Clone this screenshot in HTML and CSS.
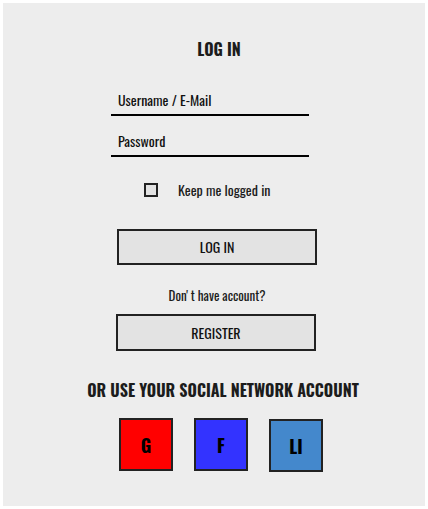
FILE: index.html
```html
<!DOCTYPE html>
<html>
<head>
<meta charset="utf-8">
<link rel="stylesheet" href="styles.css">
</head>
<body>
<div class="page">
  <h2 class="title">LOG IN</h2>
  <form class="form">
    <input class="field" type="text" placeholder="Username / E-Mail">
    <input class="field field-pass" type="password" placeholder="Password">
    <label class="remember">
      <input class="check" type="checkbox">
      <span>Keep me logged in</span>
    </label>
    <button class="btn btn-login" type="button">LOG IN</button>
  </form>
  <p class="noacc">Don' t have account?</p>
  <button class="btn btn-register" type="button">REGISTER</button>
  <h3 class="social-title">OR USE YOUR SOCIAL NETWORK ACCOUNT</h3>
  <div class="social">
    <a class="soc soc-g">G</a>
    <a class="soc soc-f">F</a>
    <a class="soc soc-li">LI</a>
  </div>
</div>
</body>
</html>
```
FILE: styles.css
```css
* { box-sizing: border-box; }
html, body { margin: 0; padding: 0; background: #fff; }
body { font-family: "Oswald", "Roboto", sans-serif; color: #1c1c1c; }

.page {
  margin: 3px;
  width: 422px;
  height: 503px;
  background: #ededed;
  padding-top: 36px;
  display: flex;
  flex-direction: column;
  align-items: flex-start;
}

.title {
  align-self: stretch;
  margin: 0;
  padding-left: 10px;
  text-align: center;
  font-size: 16px;
  line-height: 20px;
  font-weight: 700;
}

.form {
  display: flex;
  flex-direction: column;
  align-items: flex-start;
  margin: 30px 0 0 0;
}

.field {
  display: block;
  margin-left: 108px;
  width: 198px;
  height: 27px;
  padding: 0 7px 5px;
  border: 0;
  border-bottom: 2px solid #000;
  background: transparent;
  font-family: "Oswald", sans-serif;
  font-size: 14px;
  line-height: 20px;
  color: #111;
  outline: none;
}
.field::placeholder { color: #111; opacity: 1; }
.field-pass { margin-top: 14px; }

.remember {
  display: flex;
  align-items: center;
  gap: 20px;
  margin: 23px 0 0 141px;
  font-size: 14px;
  line-height: 20px;
}
.check {
  appearance: none;
  -webkit-appearance: none;
  margin: 0;
  width: 14px;
  height: 14px;
  border: 2px solid #222;
  background: #e3e3e3;
}

.btn {
  display: block;
  width: 200px;
  height: 36px;
  border: 2px solid #222;
  background: #e3e3e3;
  font-family: "Oswald", sans-serif;
  font-size: 14px;
  line-height: 32px;
  color: #111;
  padding: 0;
}
.btn-login { margin: 29px 0 0 114px; }

.noacc {
  align-self: stretch;
  margin: 22px 0 0 0;
  padding-left: 6px;
  text-align: center;
  font-size: 13px;
  line-height: 17px;
}

.btn-register { margin: 10px 0 0 113px; height: 37px; line-height: 33px; }

.social-title {
  align-self: stretch;
  margin: 29px 0 0 0;
  padding-left: 18px;
  text-align: center;
  font-size: 16px;
  line-height: 20px;
  font-weight: 700;
}

.social {
  display: flex;
  gap: 21px;
  margin: 18px 0 0 116px;
}
.soc {
  display: flex;
  align-items: center;
  justify-content: center;
  width: 54px;
  height: 53px;
  border: 2px solid #222;
  font-size: 18px;
  font-weight: 700;
  color: #000;
}
.soc-g { background: #ff0000; }
.soc-f { background: #3333ff; }
.soc-li { background: #4488cc; margin-top: 1px; }
```
